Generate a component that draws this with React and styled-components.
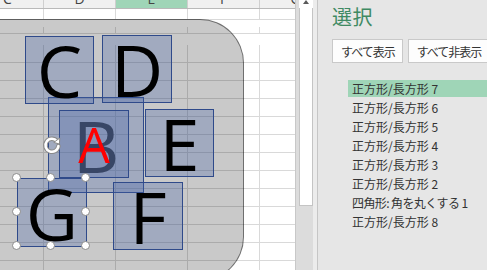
import React from "react";
import styled, { createGlobalStyle } from "styled-components";

const GlobalStyle = createGlobalStyle`
  html, body { margin: 0; padding: 0; background: #ffffff; overflow: hidden; }
  body { font-family: "Noto Sans CJK JP", "Noto Sans", sans-serif; }
`;

const Screen = styled.div`
  display: flex;
  width: 487px;
  height: 270px;
  overflow: hidden;
`;

const Sheet = styled.div`
  position: relative;
  width: 295px;
  height: 270px;
  flex: none;
  overflow: hidden;
  border-right: 1px solid #c8c8c8;
  background: #ffffff;
`;

const COLS = "72px 72px 72px 72px 72px";

const HeaderRow = styled.div`
  display: grid;
  grid-template-columns: ${COLS};
  height: 22px;
  margin: -14px 0 0 -28px;
  border-bottom: 1px solid #b9b9b9;
  background: #f0f0f0;
`;

const HeaderCell = styled.div`
  display: flex;
  align-items: flex-end;
  justify-content: center;
  padding-bottom: 1px;
  box-sizing: border-box;
  border-right: 1px solid #cfcfcf;
  background: ${(p) => (p.$active ? "#9fd5b7" : "#f0f0f0")};
  color: #444;
  font-family: "Open Sans", "Liberation Sans", sans-serif;
  font-size: 14px;
  line-height: 16px;
`;

const Body = styled.div`
  display: grid;
  grid-template-columns: ${COLS};
  grid-auto-rows: 18px;
  margin-left: -28px;
`;

const Cell = styled.div`
  box-sizing: border-box;
  border-right: 1px solid #d9d9d9;
  border-bottom: 1px solid #d9d9d9;
  height: ${(p) => p.$h}px;
`;

const Canvas = styled.div`
  position: absolute;
  inset: 0;
  pointer-events: none;
`;

const RoundShape = styled.div`
  position: absolute;
  left: -60px;
  top: 19px;
  width: 304px;
  height: 262px;
  box-sizing: border-box;
  border-radius: 44px;
  background: rgba(0, 0, 0, 0.21);
  border: 1px solid rgba(0, 0, 0, 0.45);
`;

const Box = styled.div`
  position: absolute;
  box-sizing: border-box;
  display: flex;
  align-items: center;
  justify-content: center;
  background: rgba(70, 100, 170, 0.3);
  border: 1px solid #2f4a8a;
  font-family: "Open Sans", "Liberation Sans", sans-serif;
  font-size: ${(p) => p.$size || 72}px;
  line-height: 1;
  color: ${(p) => p.$color || "#000"};
`;

const Handle = styled.div`
  position: absolute;
  width: 9px;
  height: 9px;
  margin: -5px 0 0 -5px;
  box-sizing: border-box;
  border-radius: 50%;
  background: #ffffff;
  border: 1px solid #8a8a8a;
`;

const RotateHandle = styled.svg`
  position: absolute;
  left: 42px;
  top: 135px;
`;

const Scroll = styled.div`
  display: flex;
  width: 21px;
  flex: none;
  background: #ececec;
`;

const Track = styled.div`
  display: flex;
  flex-direction: column;
  width: 17px;
  padding-left: 3px;
  box-sizing: border-box;
  background: #dcdcdc;
`;

const ArrowBtn = styled.div`
  height: 8px;
  display: flex;
  justify-content: center;
  background: #ffffff;
`;

const Thumb = styled.div`
  height: 198px;
  box-sizing: border-box;
  background: #ffffff;
  border: 1px solid #c4c4c4;
  border-top: none;
`;

const Panel = styled.div`
  flex: 1;
  background: #e6e6e6;
  border-left: 1px solid #c6c6c6;
  padding: 4px 0 0 14px;
  box-sizing: border-box;
  display: flex;
  flex-direction: column;
  overflow: hidden;
`;

const Title = styled.div`
  color: #3f8a63;
  font-size: 20px;
  line-height: 26px;
  height: 28px;
  letter-spacing: 0.5px;
`;

const ButtonRow = styled.div`
  display: flex;
  gap: 5px;
  margin-top: 7px;
  white-space: nowrap;
`;

const Button = styled.div`
  flex: none;
  height: 24px;
  box-sizing: border-box;
  padding: 0 7px 0 8px;
  display: flex;
  align-items: center;
  background: #fdfdfd;
  border: 1px solid #c9c9c9;
  color: #333;
  font-size: 12px;
  letter-spacing: -1px;
`;

const List = styled.div`
  display: flex;
  flex-direction: column;
  margin-top: 17px;
  margin-left: 16px;
  gap: 2px;
`;

const Item = styled.div`
  height: 17px;
  padding-left: 4px;
  display: flex;
  align-items: center;
  white-space: nowrap;
  font-size: 12px;
  letter-spacing: ${(p) => (p.$tight ? "-0.6px" : "0")};
  color: #333;
  background: ${(p) => (p.$selected ? "#9fd5b7" : "transparent")};
`;

const rowHeights = [11, 7, ...Array(14).fill(18)];
const headers = ["C", "D", "E", "F", "G"];

const boxes = [
  { x: 48, y: 97, w: 96, h: 96, t: "B", color: "#333a4a" },
  { x: 25, y: 36, w: 69, h: 68, t: "C" },
  { x: 102, y: 35, w: 70, h: 68, t: "D" },
  { x: 145, y: 109, w: 69, h: 68, t: "E" },
  { x: 113, y: 182, w: 70, h: 68, t: "F" },
  { x: 59, y: 110, w: 70, h: 68, t: "A", color: "#ff0000", size: 50 },
  { x: 17, y: 178, w: 70, h: 69, t: "G" },
];

const handles = [
  [17, 178], [51, 178], [86, 178],
  [17, 212], [86, 212],
  [17, 246], [51, 246], [86, 246],
];

const items = [
  "正方形/長方形 7",
  "正方形/長方形 6",
  "正方形/長方形 5",
  "正方形/長方形 4",
  "正方形/長方形 3",
  "正方形/長方形 2",
  "四角形: 角を丸くする 1",
  "正方形/長方形 8",
];

const ARC = "M15 6.2 A6.5 6.5 0 1 0 16.4 11";

export default function App() {
  return (
    <>
      <GlobalStyle />
      <Screen>
        <Sheet>
          <HeaderRow>
            {headers.map((h) => (
              <HeaderCell key={h} $active={h === "E"}>{h}</HeaderCell>
            ))}
          </HeaderRow>
          <Body>
            {rowHeights.map((h, r) =>
              headers.map((c) => <Cell key={`${r}-${c}`} $h={h} />)
            )}
          </Body>
          <Canvas>
            <RoundShape />
            {boxes.map((b) => (
              <Box
                key={b.t}
                $size={b.size}
                $color={b.color}
                style={{ left: b.x, top: b.y, width: b.w, height: b.h }}
              >
                {b.t}
              </Box>
            ))}
            <RotateHandle width="20" height="20" viewBox="0 0 20 20">
              <path d={ARC} fill="none" stroke="#8a8a8a" strokeWidth="4.5" strokeLinecap="round" />
              <path d={ARC} fill="none" stroke="#ffffff" strokeWidth="2.5" strokeLinecap="round" />
              <path d="M17.8 3 L17.4 9 L11.8 7.4 Z" fill="#ffffff" stroke="#8a8a8a" strokeWidth="1" strokeLinejoin="round" />
            </RotateHandle>
            {handles.map(([x, y], i) => (
              <Handle key={i} style={{ left: x, top: y }} />
            ))}
          </Canvas>
        </Sheet>
        <Scroll>
          <Track>
            <ArrowBtn>
              <svg width="14" height="8" viewBox="0 0 14 8">
                <path d="M4 4 L7 0 L10 4 Z" fill="#5a5a5a" />
              </svg>
            </ArrowBtn>
            <Thumb />
          </Track>
        </Scroll>
        <Panel>
          <Title>選択</Title>
          <ButtonRow>
            <Button>すべて表示</Button>
            <Button>すべて非表示</Button>
          </ButtonRow>
          <List>
            {items.map((t, i) => (
              <Item key={t} $selected={i === 0} $tight={t.startsWith("四")}>{t}</Item>
            ))}
          </List>
        </Panel>
      </Screen>
    </>
  );
}
